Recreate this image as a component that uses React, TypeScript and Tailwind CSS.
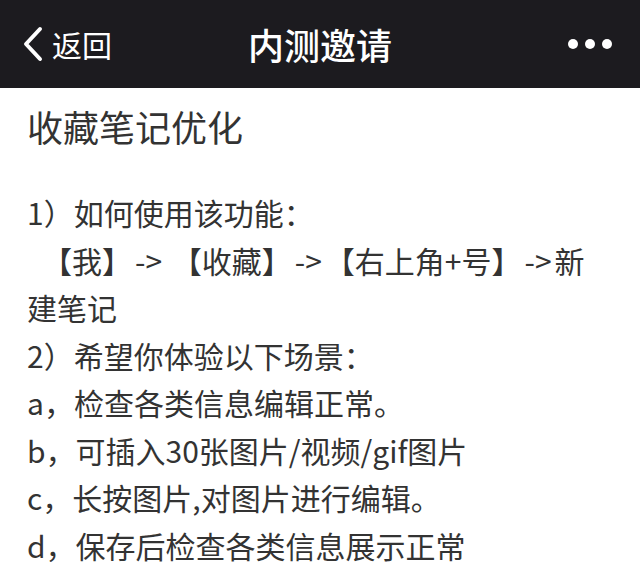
import React from "react";

const font = { fontFamily: '"Noto Sans CJK SC", "Noto Sans", sans-serif' };

const lines = [
  "2）希望你体验以下场景：",
  "a，检查各类信息编辑正常。",
  "b，可插入30张图片/视频/gif图片",
  "c，长按图片,对图片进行编辑。",
  "d，保存后检查各类信息展示正常",
];

export default function App() {
  return (
    <div className="w-[640px] h-[579px] bg-white overflow-hidden" style={font}>
      {/* Nav bar */}
      <div className="h-[88px] bg-[#1c1b1f] flex items-center justify-between px-[22px] relative">
        <div className="flex items-center gap-[8px] text-white">
          <svg width="22" height="36" viewBox="0 0 22 36" fill="none">
            <path d="M18 3 L4 18 L18 33" stroke="white" strokeWidth="4" strokeLinecap="round" strokeLinejoin="round" />
          </svg>
          <span className="text-[30px] leading-none">返回</span>
        </div>
        <div className="absolute left-1/2 top-1/2 -translate-x-1/2 -translate-y-1/2 text-white text-[36px] font-medium leading-none">
          内测邀请
        </div>
        <div className="flex items-center gap-[7px] pr-[6px]">
          <span className="w-[10px] h-[10px] rounded-full bg-white" />
          <span className="w-[10px] h-[10px] rounded-full bg-white" />
          <span className="w-[10px] h-[10px] rounded-full bg-white" />
        </div>
      </div>

      {/* Content */}
      <div className="px-[27px] pt-[14px] text-[#333333]">
        <h1 className="text-[36px] leading-[48px] font-normal">收藏笔记优化</h1>
        <div className="mt-[39px] text-[30px] leading-[47.5px]">
          <p>1）如何使用该功能：</p>
          <p className="whitespace-nowrap pl-[15px]">
            【我】<span className="mx-[3px]">-&gt;</span> 【收藏】<span className="mx-[3px]">-&gt;</span>【右上角+号】<span className="mx-[3px]">-&gt;</span>新
          </p>
          <p>建笔记</p>
          {lines.map((l) => (
            <p key={l} className="whitespace-nowrap">{l}</p>
          ))}
        </div>
      </div>
    </div>
  );
}
